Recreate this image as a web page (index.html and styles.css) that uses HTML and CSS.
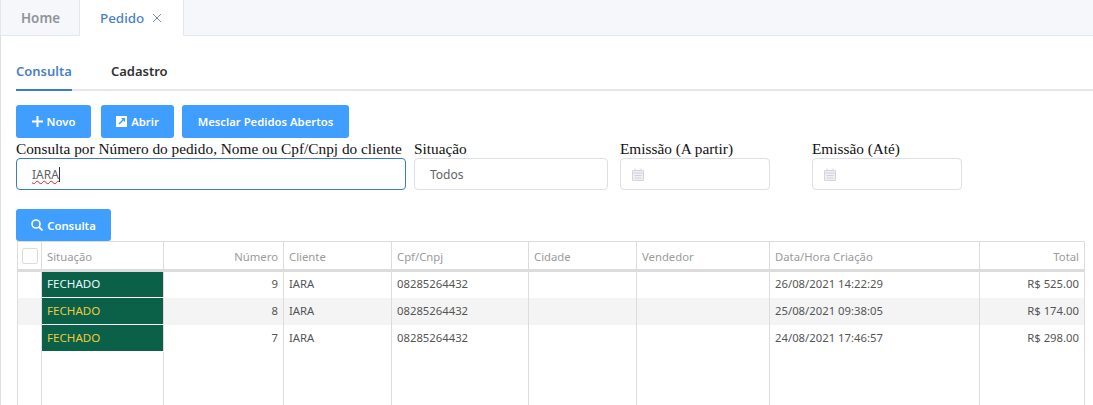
FILE: index.html
```html
<!DOCTYPE html>
<html lang="en">
<head>
    <meta charset="UTF-8">
    <title>Pedido</title>
    <link rel="stylesheet" href="styles.css">
</head>
<body>
<div class="tabbar">
    <div class="tab">Home</div>
    <div class="tab tab-active">Pedido
        <svg class="tab-close" width="10" height="10" viewBox="0 0 10 10"><path d="M1 1l8 8M9 1l-8 8" stroke="#7f8c9e" stroke-width="1" fill="none"/></svg>
    </div>
</div>
<div class="content">
    <div class="subtabs">
        <div class="subtab subtab-active">Consulta</div>
        <div class="subtab">Cadastro</div>
    </div>
    <div class="actions">
        <button class="btn btn-novo" type="button">
            <svg width="11" height="11" viewBox="0 0 11 11"><path d="M5.5 0v11M0 5.5h11" stroke="#fff" stroke-width="2" fill="none"/></svg>
            Novo
        </button>
        <button class="btn btn-abrir" type="button">
            <svg width="11" height="11" viewBox="0 0 11 11"><path fill="#fff" fill-rule="evenodd" d="M0 0h11v11H0zM5 2l1.500 1.500L2.500 7.500l1 1 4-4L9 6V2z"/></svg>
            Abrir
        </button>
        <button class="btn btn-mesclar" type="button">Mesclar Pedidos Abertos</button>
    </div>
    <div class="filters">
        <div class="field field-busca">
            <label for="busca">Consulta por Número do pedido, Nome ou Cpf/Cnpj do cliente</label>
            <div class="input input-focus" id="busca"><span class="typed">IARA</span><span class="caret"></span></div>
        </div>
        <div class="field field-situacao">
            <label>Situação</label>
            <div class="input">Todos</div>
        </div>
        <div class="field field-data">
            <label>Emissão (A partir)</label>
            <div class="input input-date">
                <svg width="12" height="13" viewBox="0 0 12 13"><path d="M.5 2.500h11v10H.5z" fill="#f0f1f4" stroke="#d3d6dc"/><path d="M.5 5h11M3 .5v2M9 .5v2M2.500 7.500h7M2.500 10h7" stroke="#cfd2d8" fill="none"/></svg>
            </div>
        </div>
        <div class="field field-data">
            <label>Emissão (Até)</label>
            <div class="input input-date">
                <svg width="12" height="13" viewBox="0 0 12 13"><path d="M.5 2.500h11v10H.5z" fill="#f0f1f4" stroke="#d3d6dc"/><path d="M.5 5h11M3 .5v2M9 .5v2M2.500 7.500h7M2.500 10h7" stroke="#cfd2d8" fill="none"/></svg>
            </div>
        </div>
    </div>
    <button class="btn btn-consulta" type="button">
        <svg width="12" height="12" viewBox="0 0 12 12"><circle cx="5" cy="5" r="4" stroke="#fff" stroke-width="1.600" fill="none"/><path d="M8 8l3.500 3.500" stroke="#fff" stroke-width="1.800"/></svg>
        Consulta
    </button>
    <table class="grid">
        <colgroup>
            <col class="c-check"><col class="c-situacao"><col class="c-numero"><col class="c-cliente"><col class="c-cpf">
            <col class="c-cidade"><col class="c-vendedor"><col class="c-data"><col class="c-total">
        </colgroup>
        <thead>
            <tr>
                <th><span class="check"></span></th>
                <th>Situação</th>
                <th class="right">Número</th>
                <th>Cliente</th>
                <th>Cpf/Cnpj</th>
                <th>Cidade</th>
                <th>Vendedor</th>
                <th>Data/Hora Criação</th>
                <th class="right">Total</th>
            </tr>
        </thead>
        <tbody>
            <tr>
                <td></td><td class="status status-first">FECHADO</td><td class="right">9</td><td>IARA</td><td>08285264432</td>
                <td></td><td></td><td>26/08/2021 14:22:29</td><td class="right">R$ 525.00</td>
            </tr>
            <tr class="even">
                <td></td><td class="status">FECHADO</td><td class="right">8</td><td>IARA</td><td>08285264432</td>
                <td></td><td></td><td>25/08/2021 09:38:05</td><td class="right">R$ 174.00</td>
            </tr>
            <tr>
                <td></td><td class="status">FECHADO</td><td class="right">7</td><td>IARA</td><td>08285264432</td>
                <td></td><td></td><td>24/08/2021 17:46:57</td><td class="right">R$ 298.00</td>
            </tr>
            <tr class="filler">
                <td></td><td></td><td></td><td></td><td></td><td></td><td></td><td></td><td></td>
            </tr>
        </tbody>
    </table>
</div>
</body>
</html>
```

FILE: styles.css
```css
html, body {
    height: 405px;
}

body {
    margin: 0;
    overflow: hidden;
    background-color: #fff;
    font-family: "Noto Sans", sans-serif;
    color: #303133;
}

.tabbar {
    display: flex;
    height: 36px;
    box-sizing: border-box;
    background-color: #f5f7fa;
    border-bottom: 1px solid #e4e7ed;
    border-left: 1px solid #e4e7ed;
}

.tab {
    display: flex;
    align-items: center;
    box-sizing: border-box;
    width: 79px;
    height: 36px;
    padding-left: 20px;
    font-size: 13.4px;
    font-weight: 600;
    color: #909399;
    border-right: 1px solid #e4e7ed;
}

.tab-active {
    width: 104px;
    background-color: #fff;
    border-bottom: 1px solid #fff;
    color: #4a7fc9;
    font-weight: 500;
}

.tab-close {
    margin-left: 8px;
}

.content {
    height: 369px;
    box-sizing: border-box;
    padding-left: 15px;
    border-left: 1px solid #dcdfe6;
}

.subtabs {
    display: flex;
    height: 55px;
    border-bottom: 2px solid #e4e7ed;
    box-sizing: border-box;
}

.subtab {
    box-sizing: border-box;
    height: 55px;
    padding-top: 26px;
    margin-right: 39px;
    font-size: 13px;
    font-weight: 600;
    color: #303133;
}

.subtab-active {
    color: #4a7fc9;
    border-bottom: 2px solid #3a7cc9;
}

.actions {
    display: flex;
    margin-top: 14px;
}

.btn {
    display: inline-flex;
    align-items: center;
    justify-content: center;
    gap: 4px;
    height: 33px;
    padding: 0;
    border: none;
    border-radius: 3px;
    background-color: #409eff;
    color: #fff;
    font-family: "Noto Sans", sans-serif;
    font-size: 11.3px;
    font-weight: 600;
}

.btn-novo {
    width: 75px;
    margin-right: 10px;
}

.btn-abrir {
    width: 73px;
    margin-right: 8px;
}

.btn-mesclar {
    width: 167px;
}

.filters {
    display: flex;
    margin-top: 1px;
}

.field label {
    display: block;
    height: 19px;
    font-family: "Liberation Serif", serif;
    font-size: 15.3px;
    line-height: 19px;
    color: #111;
    white-space: nowrap;
}

.input {
    display: flex;
    align-items: center;
    box-sizing: border-box;
    height: 32px;
    padding-left: 15px;
    border: 1px solid #dcdfe6;
    border-radius: 4px;
    font-size: 12px;
    color: #606266;
}

.input-focus {
    border-color: #3a7cc9;
}

.input-date {
    padding-left: 11px;
}

.typed {
    text-decoration: underline wavy #e02020 1px;
}

.caret {
    width: 1px;
    height: 15px;
    background-color: #333;
}

.field-busca {
    width: 390px;
    margin-right: 8px;
}

.field-situacao {
    width: 194px;
    margin-right: 12px;
}

.field-data {
    width: 150px;
    margin-right: 42px;
}

.btn-consulta {
    display: flex;
    width: 95px;
    height: 32px;
    margin-top: 19px;
}

.grid {
    width: 1067px;
    height: 164px;
    margin-left: 1px;
    table-layout: fixed;
    border-collapse: collapse;
    font-size: 11.3px;
}

.c-check { width: 24px; }
.c-situacao { width: 122px; }
.c-numero { width: 120px; }
.c-cliente { width: 108px; }
.c-cpf { width: 137px; }
.c-cidade { width: 108px; }
.c-vendedor { width: 133px; }
.c-data { width: 210px; }
.c-total { width: 105px; }

.grid th,
.grid td {
    box-sizing: border-box;
    padding: 0 5px;
    border-left: 1px solid #dcdcdc;
    border-right: 1px solid #dcdcdc;
    text-align: left;
    white-space: nowrap;
}

.grid th {
    height: 29px;
    padding-top: 1px;
    border-top: 1px solid #dcdcdc;
    border-bottom: 3px solid #dcdcdc;
    font-weight: 400;
    color: #9b9b9b;
}

.grid td {
    height: 27px;
    padding-bottom: 2px;
    color: #555;
}

.grid .right {
    text-align: right;
}

.even td {
    background-color: #f4f4f4;
}

.grid .status {
    background-color: #0a6148;
    border-bottom: 1px solid #fff;
    font-size: 11.6px;
    color: #f0c93c;
}

.grid .status-first {
    color: #e8f8ff;
}

.filler td {
    height: auto;
}

.check {
    display: block;
    box-sizing: border-box;
    width: 16px;
    height: 16px;
    margin-left: -1px;
    border: 1px solid #dcdcdc;
    border-radius: 2px;
    background-color: #fff;
}
```
